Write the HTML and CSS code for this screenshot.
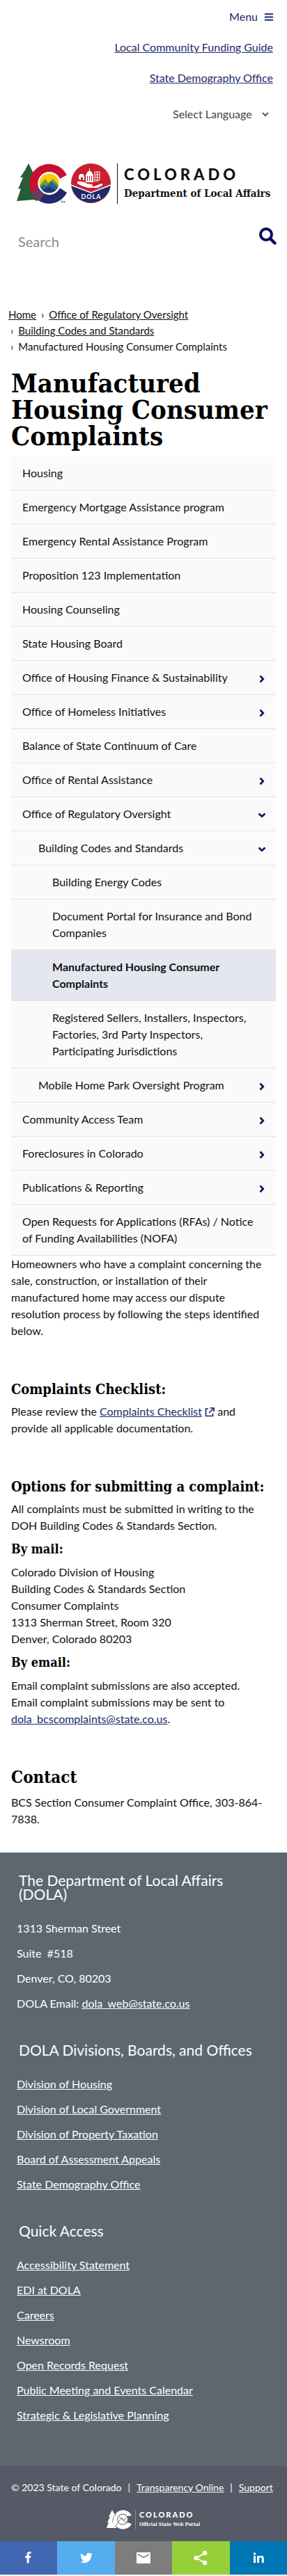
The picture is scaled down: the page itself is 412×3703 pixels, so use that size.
FILE: index.html
```html
<!DOCTYPE html>
<html lang="en">
<head>
<meta charset="utf-8">
<meta name="viewport" content="width=device-width, initial-scale=1">
<title>Manufactured Housing Consumer Complaints | Department of Local Affairs</title>
<link rel="stylesheet" href="styles.css">
</head>
<body>
<svg class="defs" width="0" height="0" aria-hidden="true">
  <symbol id="chev" viewBox="0 0 8 12"><path d="M1.5 1.5 5.8 6 1.5 10.5" fill="none" stroke="currentColor" stroke-width="2.6"/></symbol>
</svg>

<header class="site-header">
  <div class="utility">
    <button class="menu-button" type="button">Menu
      <svg width="12" height="11" viewBox="0 0 12 11" aria-hidden="true"><path d="M0 1.2h12M0 5.5h12M0 9.8h12" stroke="currentColor" stroke-width="2"/></svg>
    </button>
    <a href="#">Local Community Funding Guide</a>
    <a href="#">State Demography Office</a>
    <div class="language">
      <select aria-label="Select Language"><option>Select Language</option></select>
      <svg width="10" height="7" viewBox="0 0 10 7" aria-hidden="true"><path d="M1 1.2 5 5.2 9 1.2" fill="none" stroke="#444" stroke-width="1.8"/></svg>
    </div>
  </div>

  <a class="brand" href="#" aria-label="Colorado Department of Local Affairs">
    <svg class="brand-mark" width="136" height="58" viewBox="0 0 136 58" aria-hidden="true">
      <path d="M17 0 27 20 30 54 24 52 0 54 6 36 2 37 9 20 5 20 11 11Z" fill="#245d38"/>
      <clipPath id="c-shape"><path d="M72 16.500A28.500 28.500 0 1 0 72 42L62 35A16.500 16.500 0 1 1 62 22Z"/></clipPath>
      <g clip-path="url(#c-shape)">
        <path d="M15 0H75V30H15Z" fill="#c8102e"/>
        <path d="M15 58V50L38 30 46 36H75V58Z" fill="#1f2a6b"/>
        <path d="M15 28H34L41 41 29 54 15 50Z" fill="#c8102e"/>
        <path d="M20 44 34 30 41 43 29 58Z" fill="#6d3a5d"/>
      </g>
      <clipPath id="c-inner"><circle cx="46.500" cy="28.500" r="14"/></clipPath>
      <g clip-path="url(#c-inner)">
        <path d="M30 12H63V45H30Z" fill="#ffc800"/>
        <path d="M30 35 41 22 46 29 52 22 64 36V45H30Z" fill="#6f9a35"/>
        <path d="M30 39 38 30 42 33 49 25 64 38V45H30Z" fill="#22639a"/>
        <path d="M30 43 46 33 63 42V48H30Z" fill="#27356f"/>
      </g>
      <circle cx="46.500" cy="28.500" r="15" fill="none" stroke="#fff" stroke-width="1.800"/>
      <path d="M63 54h3M64.500 54v3M67 57v-3l1 2 1-2v3" fill="none" stroke="#555" stroke-width=".6"/>
      <circle cx="106.500" cy="28.500" r="28.500" fill="#c8202f"/>
      <path d="M78.200 31 106.500 42 134.800 31A28.500 28.500 0 0 1 78.200 31Z" fill="#1f2a6b"/>
      <path d="M78 31 106.500 42 135 31" fill="none" stroke="#fff" stroke-width="1.600"/>
      <path d="M87 26C92 25 97 26 101 29L108 30C110 31 109 33 106 33H111L121 29C124 29 124 31 122 32L116 35 103 35C97 34 93 32 87 29Z" fill="#fff"/>
      <path d="M89 22V18L91 15H95L97 18V24H95V20H92V24Z" fill="#fff"/>
      <path d="M99 26V16H100C100 13 102 11 104 11V7H105V11C107 11 109 13 109 16H110V27H99Z" fill="#fff"/>
      <path d="M101.500 18v7M104.500 18v7M107.500 18v7" stroke="#c8202f"/>
      <path d="M112 12h7v12M112 12v15M115.500 12v15M112 16h7M112 20h7M112 24h7" fill="none" stroke="#fff" stroke-width="1"/>
      <text x="107" y="51" text-anchor="middle" class="mark-text">DOLA</text>
    </svg>
    <span class="brand-words">
      <span class="brand-state">COLORADO</span>
      <span class="brand-dept">Department of Local Affairs</span>
    </span>
  </a>

  <form class="search">
    <input type="search" placeholder="Search" aria-label="Search">
    <button type="button" aria-label="Submit search">
      <svg width="25" height="25" viewBox="0 0 25 25" aria-hidden="true"><circle cx="10" cy="10" r="8" fill="none" stroke="currentColor" stroke-width="4"/><path d="M16 16 22.500 22.500" stroke="currentColor" stroke-width="4.500" stroke-linecap="round"/></svg>
    </button>
  </form>
</header>

<nav aria-label="Breadcrumb">
  <ol class="crumbs">
    <li><a href="#">Home</a></li>
    <li><a href="#">Office of Regulatory Oversight</a></li>
    <li><a href="#">Building Codes and Standards</a></li>
    <li>Manufactured Housing Consumer Complaints</li>
  </ol>
</nav>

<main class="content">
  <h1>Manufactured Housing Consumer Complaints</h1>

  <nav class="side" aria-label="Section">
    <a href="#">Housing</a>
    <a href="#">Emergency Mortgage Assistance program</a>
    <a href="#">Emergency Rental Assistance Program</a>
    <a href="#">Proposition 123 Implementation</a>
    <a href="#">Housing Counseling</a>
    <a href="#">State Housing Board</a>
    <a href="#">Office of Housing Finance &amp; Sustainability<svg class="chev"><use href="#chev"/></svg></a>
    <a href="#">Office of Homeless Initiatives<svg class="chev"><use href="#chev"/></svg></a>
    <a href="#">Balance of State Continuum of Care</a>
    <a href="#">Office of Rental Assistance<svg class="chev"><use href="#chev"/></svg></a>
    <a href="#">Office of Regulatory Oversight<svg class="chev open"><use href="#chev"/></svg></a>
    <a class="level-2" href="#">Building Codes and Standards<svg class="chev open"><use href="#chev"/></svg></a>
    <a class="level-3" href="#">Building Energy Codes</a>
    <a class="level-3" href="#">Document Portal for Insurance and Bond Companies</a>
    <a class="level-3 current" href="#" aria-current="page">Manufactured Housing Consumer Complaints</a>
    <a class="level-3" href="#">Registered Sellers, Installers, Inspectors, Factories, 3rd Party Inspectors, Participating Jurisdictions</a>
    <a class="level-2" href="#">Mobile Home Park Oversight Program<svg class="chev"><use href="#chev"/></svg></a>
    <a href="#">Community Access Team<svg class="chev"><use href="#chev"/></svg></a>
    <a href="#">Foreclosures in Colorado<svg class="chev"><use href="#chev"/></svg></a>
    <a href="#">Publications &amp; Reporting<svg class="chev"><use href="#chev"/></svg></a>
    <a href="#">Open Requests for Applications (RFAs) / Notice of Funding Availabilities (NOFA)</a>
  </nav>

  <section>
    <p>Homeowners who have a complaint concerning the sale, construction, or installation of their manufactured home may access our dispute resolution process by following the steps identified below.</p>
  </section>
  <section>
    <h3>Complaints Checklist:</h3>
    <p>Please review the <a href="#">Complaints Checklist</a> <svg class="external" width="14" height="14" viewBox="0 0 14 14" aria-label="external link"><path d="M5 2H1.500V12.500H11.500V9M7.500 1H13V6.500M13 1 6 8" fill="none" stroke="currentColor" stroke-width="1.700"/></svg> and<br>provide all applicable documentation.</p>
  </section>
  <section>
    <h3>Options for submitting a complaint:</h3>
    <p>All complaints must be submitted in writing to the DOH Building Codes &amp; Standards Section.</p>
    <h4>By mail:</h4>
    <p>Colorado Division of Housing<br>Building Codes &amp; Standards Section<br>Consumer Complaints<br>1313 Sherman Street, Room 320<br>Denver, Colorado 80203</p>
    <h4>By email:</h4>
    <p>Email complaint submissions are also accepted.<br>Email complaint submissions may be sent to <a href="#">dola_bcscomplaints@state.co.us</a>.</p>
  </section>
  <section>
    <h2>Contact</h2>
    <p>BCS Section Consumer Complaint Office, 303-864-7838.</p>
  </section>
</main>

<footer>
  <div class="footer-main">
    <section>
      <h2>The Department of Local Affairs (DOLA)</h2>
      <p>1313 Sherman Street</p>
      <p>Suite &nbsp;#518</p>
      <p>Denver, CO, 80203</p>
      <p>DOLA Email: <a href="#">dola_web@state.co.us</a></p>
    </section>
    <section>
      <h2>DOLA Divisions, Boards, and Offices</h2>
      <p><a href="#">Division of Housing</a></p>
      <p><a href="#">Division of Local Government</a></p>
      <p><a href="#">Division of Property Taxation</a></p>
      <p><a href="#">Board of Assessment Appeals</a></p>
      <p><a href="#">State Demography Office</a></p>
    </section>
    <section>
      <h2>Quick Access</h2>
      <p><a href="#">Accessibility Statement</a></p>
      <p><a href="#">EDI at DOLA</a></p>
      <p><a href="#">Careers</a></p>
      <p><a href="#">Newsroom</a></p>
      <p><a href="#">Open Records Request</a></p>
      <p><a href="#">Public Meeting and Events Calendar</a></p>
      <p><a href="#">Strategic &amp; Legislative Planning</a></p>
    </section>
  </div>
  <div class="legal">
    <p><span>© 2023 State of Colorado</span><span>|</span><a href="#">Transparency Online</a><span>|</span><a href="#">Support</a></p>
    <a class="portal" href="#" aria-label="Colorado Official State Web Portal">
      <svg width="36" height="28" viewBox="0 0 36 28" aria-hidden="true">
        <path d="M8 0 13 9 14 26H0L3 18H1L5 10H3Z" fill="#fff"/>
        <path d="M36 8A13.700 13.700 0 1 0 36 20L30 18A7 7 0 1 1 30 9Z" fill="#fff"/>
        <circle cx="23" cy="13.500" r="7.500" fill="#fff" stroke="#565a66"/>
        <path d="M17 17 22 11 25 15 28 11M18 10 28 18M17 18 11 25M9 18C8 12 11 8 14 7" fill="none" stroke="#565a66" stroke-width=".8"/>
      </svg>
      <span class="portal-words">
        <span class="portal-state">COLORADO</span>
        <span class="portal-name">Official State Web Portal</span>
      </span>
    </a>
  </div>
  <div class="share">
    <button class="facebook" type="button" aria-label="Share on Facebook"><svg width="32" height="32" viewBox="0 0 32 32"><path d="M17.800 27V17h3.300l.5-4h-3.800v-2.500c0-1.100.3-1.900 1.900-1.900h2V5.200A27 27 0 0 0 18.800 5c-2.900 0-4.900 1.700-4.900 5v3h-3.300v4h3.300v10z" fill="#fff" transform="translate(3.200 3.200) scale(.75)"/></svg></button>
    <button class="twitter" type="button" aria-label="Share on Twitter"><svg width="32" height="32" viewBox="0 0 32 32"><path d="M28 8.600a10 10 0 0 1-2.800.8 5 5 0 0 0 2.200-2.700c-1 .5-2 1-3.100 1.200a4.900 4.900 0 0 0-8.500 3.300c0 .4 0 .8.100 1.100-4-.2-7.700-2.100-10.100-5.100a4.900 4.900 0 0 0 1.500 6.600c-.8 0-1.600-.2-2.200-.6v.1c0 2.400 1.700 4.400 3.900 4.800a5 5 0 0 1-2.200.1 4.900 4.900 0 0 0 4.600 3.400A9.900 9.900 0 0 1 4 23.600 14 14 0 0 0 11.500 25.800c9.100 0 14-7.500 14-14v-.6A10 10 0 0 0 28 8.600z" fill="#fff" transform="translate(4 4) scale(.75)"/></svg></button>
    <button class="mail" type="button" aria-label="Share by email"><svg width="32" height="32" viewBox="0 0 32 32"><rect x="6" y="8" width="20" height="16" rx="1" fill="#fff"/><path d="M8 11 16 15.500 24 11" fill="none" stroke="#7d7d7d" stroke-width="1.500"/></svg></button>
    <button class="sharethis" type="button" aria-label="Share"><svg width="32" height="32" viewBox="0 0 32 32"><path d="M22 9 10 16 22 23" fill="none" stroke="#fff" stroke-width="2"/><circle cx="22" cy="9" r="3.200" fill="#fff"/><circle cx="9.500" cy="16" r="3.200" fill="#fff"/><circle cx="22" cy="23" r="3.200" fill="#fff"/></svg></button>
    <button class="linkedin" type="button" aria-label="Share on LinkedIn"><svg width="32" height="32" viewBox="0 0 32 32"><path d="M9 13h3v10H9zM14 13h3v1.500c.6-1 1.600-1.800 3-1.800 3 0 3.800 1.900 3.800 4.600V23h-3v-5c0-1.300-.2-2.700-1.800-2.700-1.500 0-2 1.200-2 2.600V23h-3z" fill="#fff"/><circle cx="10.500" cy="10" r="1.800" fill="#fff"/></svg></button>
  </div>
</footer>
</body>
</html>
```
FILE: styles.css
```css
* { box-sizing: border-box; }

body {
  margin: 0;
  background: #fff;
  color: #111;
  font-family: Lato, "Liberation Sans", sans-serif;
  font-size: 16px;
  line-height: 24px;
}

a { color: #1b2a6b; }
p, h1, h2, h3, h4, ol { margin: 0; }
button { padding: 0; border: 0; background: none; font: inherit; cursor: pointer; }
.defs { display: block; height: 0; }

/* Header */
.utility {
  display: flex;
  flex-direction: column;
  align-items: flex-end;
  gap: 20px;
  padding: 12px 20px 0;
}
.menu-button { display: flex; align-items: center; gap: 10px; color: #1b2a6b; }
.language { display: flex; align-items: center; gap: 14px; padding: 8px 6px 0 0; }
.language select {
  appearance: none;
  padding: 0;
  border: 0;
  background: none;
  color: #444;
  font: inherit;
}

.brand {
  display: flex;
  align-items: stretch;
  gap: 8px;
  margin: 59px 24px 0;
  color: #111;
  text-decoration: none;
}
.brand-mark { flex: none; }
.mark-text { fill: #fff; font-family: Lato, sans-serif; font-size: 9px; font-weight: 700; letter-spacing: 1px; }
.brand-words {
  display: flex;
  flex-direction: column;
  justify-content: center;
  gap: 3px;
  padding-left: 9px;
  border-left: 1px solid #111;
  white-space: nowrap;
}
.brand-state { font-size: 22px; font-weight: 900; letter-spacing: 5px; line-height: 24px; }
.brand-dept { font-family: "DejaVu Serif Condensed", "DejaVu Serif", serif; font-size: 15px; font-weight: 700; line-height: 24px; }

.search { display: flex; align-items: flex-start; padding: 34px 15px 0 26px; }
.search input {
  flex: 1;
  min-width: 0;
  height: 40px;
  padding: 0;
  border: 0;
  background: none;
  font: inherit;
  font-size: 20px;
}
.search input::placeholder { color: #8c8c8c; }
.search button { color: #0a0a5c; }
.search button svg { display: block; }

/* Breadcrumb */
.crumbs {
  display: flex;
  flex-wrap: wrap;
  padding: 74px 60px 0 12px;
  list-style: none;
  font-size: 15px;
  line-height: 23px;
}
.crumbs a { color: #111; }
.crumbs li + li::before { content: "›"; padding: 0 7px 0 3px; }
.crumbs li:nth-child(2)::before { padding-left: 7px; }

/* Content */
.content { padding: 0 16px; }
h1, .content h2, h3, h4 { font-family: "DejaVu Serif Condensed", "DejaVu Serif", serif; font-weight: 700; color: #000; }
h1 { padding: 22px 0 10px; font-size: 38px; line-height: 38px; }
h3 { font-size: 20px; line-height: 24px; }
h4 { font-size: 18px; line-height: 24px; }
.content h2 { margin-bottom: 12px; font-size: 24px; line-height: 24px; }
.content section + section { margin-top: 60px; }
.content h3 { margin-bottom: 8px; }
.content h4 { margin: 10px 0 9px; }
.external { color: #1b2a6b; vertical-align: -2px; }

.side a {
  display: flex;
  align-items: flex-start;
  justify-content: space-between;
  min-height: 49px;
  padding: 12px 16px;
  border-bottom: 1px solid #e2e2e2;
  background: #fafafa;
  color: #111;
  text-decoration: none;
}
.side .level-2 { padding-left: 39px; }
.side .level-3 { padding-left: 59px; }
.side .current { background: #e4e7ef; font-weight: 700; }
.chev { flex: none; width: 8px; height: 12px; margin-top: 8px; color: #12125c; }
.chev.open { transform: rotate(90deg); }

/* Footer */
footer { margin-top: 36px; }
footer a, footer p { color: #fff; }
.footer-main { padding: 30px 24px 61px; background: #5c6770; }
.footer-main section + section { margin-top: 45px; }
.footer-main h2 { padding: 0 3px; margin-bottom: 27px; font-size: 21px; font-weight: 400; line-height: 20px; color: #fff; }
.footer-main p + p { margin-top: 12px; }
.legal { padding: 19px 16px 17px; background: #565a66; font-size: 14px; }
.legal p { display: flex; flex-wrap: wrap; column-gap: 9px; }
.portal { display: flex; justify-content: center; gap: 5px; margin-top: 20px; padding-left: 28px; text-decoration: none; }
.portal-words { display: flex; flex-direction: column; gap: 2px; padding-left: 5px; border-left: 1px solid #8b8e97; }
.portal-state { font-size: 11px; font-weight: 900; letter-spacing: 2px; line-height: 14px; }
.portal-name { font-family: "DejaVu Serif Condensed", "DejaVu Serif", serif; font-size: 7px; font-weight: 700; line-height: 10px; }

.share { display: grid; grid-template-columns: repeat(5, 1fr); padding-bottom: 1px; }
.share button { display: flex; align-items: center; justify-content: center; height: 48px; }
.facebook { background: #4267b2; }
.twitter { background: #55acee; }
.mail { background: #7d7d7d; }
.sharethis { background: #95d03a; }
.linkedin { background: #0077b5; }
```
